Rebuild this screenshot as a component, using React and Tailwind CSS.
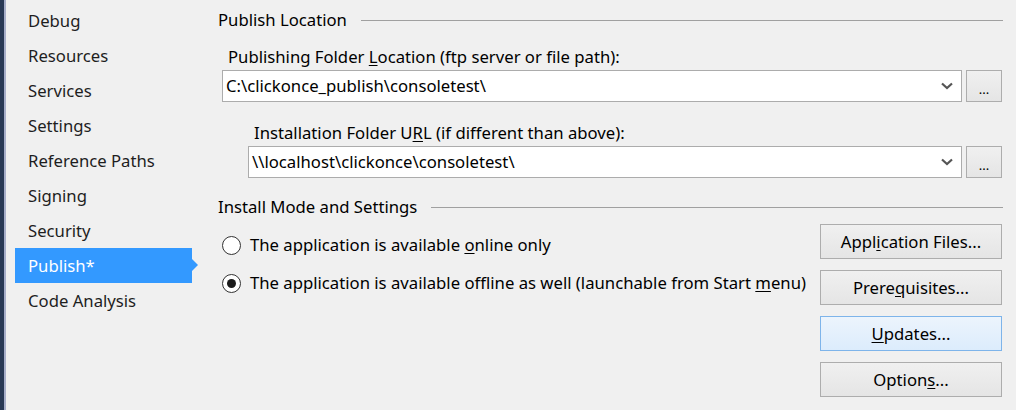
import React from 'react';

const font = { fontFamily: '"Noto Sans", "Open Sans", sans-serif' };

const navItems = [
  'Debug',
  'Resources',
  'Services',
  'Settings',
  'Reference Paths',
  'Signing',
  'Security',
  'Publish*',
  'Code Analysis',
];

function Chevron() {
  return (
    <svg width="12" height="8" viewBox="0 0 12 8" className="shrink-0">
      <path d="M1 1.5 L6 6 L11 1.5" fill="none" stroke="#555" strokeWidth="2.2" />
    </svg>
  );
}

function Combo({ value, left }) {
  return (
    <div className="flex items-center gap-1 pr-[14px]" style={{ paddingLeft: left }}>
      <div className="flex-1 h-[32px] bg-white border border-[#acacac] flex items-center pl-[3px] pr-[8px]">
        <span className="flex-1 text-[16.7px] text-black">{value}</span>
        <Chevron />
      </div>
      <div className="w-[36px] h-[32px] border border-[#adadad] bg-gradient-to-b from-[#f0f0f0] to-[#e5e5e5] flex items-end justify-center pb-[5px] text-[13px] leading-none text-black">
        ...
      </div>
    </div>
  );
}

function Section({ title }) {
  return (
    <div className="flex items-center gap-[14px] pr-[13px] h-[22px]">
      <span className="text-[16.7px] text-black whitespace-nowrap">{title}</span>
      <div className="flex-1 h-px bg-[#a0a0a0]" />
    </div>
  );
}

function Radio({ checked, children }) {
  return (
    <div className="flex items-center gap-[9px] h-[22px]">
      <div className="w-[19px] h-[19px] rounded-full border border-[#333] bg-white flex items-center justify-center">
        {checked && <div className="w-[9px] h-[9px] rounded-full bg-[#1a1a1a]" />}
      </div>
      <span className="text-[16.7px] text-black whitespace-nowrap">{children}</span>
    </div>
  );
}

function Btn({ children, active }) {
  return (
    <div
      className={`h-[35px] w-[182px] flex items-center justify-center text-[16.7px] text-black border ${
        active
          ? 'border-[#7eb4ea] bg-gradient-to-b from-[#ecf4fc] to-[#dcecfc]'
          : 'border-[#adadad] bg-gradient-to-b from-[#f0f0f0] to-[#e5e5e5]'
      }`}
    >
      {children}
    </div>
  );
}

export default function App() {
  return (
    <div className="w-[1016px] h-[410px] bg-[#f0f0f0] flex overflow-hidden" style={font}>
      {/* window edge */}
      <div className="w-[4px] bg-[#293955]" />
      <div className="w-[2px] bg-[#a7aec9]" />

      {/* Sidebar */}
      <div className="w-[202px] pl-[9px] pt-[3px] flex flex-col">
        {navItems.map((item) => {
          const active = item === 'Publish*';
          return (
            <div key={item} className="relative w-[177px]">
              <div
                className={`h-[35px] flex items-center pl-[13px] text-[16.7px] ${
                  active ? 'bg-[#3399ff] text-white' : 'text-[#1e1e1e]'
                }`}
              >
                {item}
              </div>
              {active && (
                <div className="absolute right-[-6px] top-[11px] w-0 h-0 border-y-[6px] border-y-transparent border-l-[6px] border-l-[#3399ff]" />
              )}
            </div>
          );
        })}
      </div>

      {/* Main */}
      <div className="flex-1 pl-[10px] pt-[9px] flex flex-col">
        <Section title="Publish Location" />
        <div className="pl-[10px] mt-[14px] h-[24px] flex items-center text-[16.7px] text-black">
          Publishing Folder&nbsp;<span className="underline underline-offset-2">L</span>ocation (ftp server or file path):
        </div>
        <div className="mt-[1px] ml-[4px]">
          <Combo value="C:\clickonce_publish\consoletest\" left={0} />
        </div>
        <div className="pl-[36px] mt-[19px] h-[24px] flex items-center text-[16.7px] text-black">
          Installation Folder U<span className="underline underline-offset-2">R</span>L (if different than above):
        </div>
        <div className="mt-[1px]">
          <Combo value="\\localhost\clickonce\consoletest\" left={30} />
        </div>
        <div className="mt-[18px]">
          <Section title="Install Mode and Settings" />
        </div>

        <div className="flex mt-[6px] pr-[14px]">
          <div className="flex-1 pl-[4px] pt-[10px] flex flex-col gap-[16px]">
            <Radio>
              The application is available <span className="underline underline-offset-2">o</span>nline only
            </Radio>
            <Radio checked>
              The application is available offline as well (launchable from Start{' '}
              <span className="underline underline-offset-2">m</span>enu)
            </Radio>
          </div>
          <div className="flex flex-col gap-[11px]">
            <Btn>
              Appl<span className="underline underline-offset-2">i</span>cation Files...
            </Btn>
            <Btn>
              Prere<span className="underline underline-offset-2">q</span>uisites...
            </Btn>
            <Btn active>
              <span className="underline underline-offset-2">U</span>pdates...
            </Btn>
            <Btn>
              Option<span className="underline underline-offset-2">s</span>...
            </Btn>
          </div>
        </div>
      </div>
    </div>
  );
}
